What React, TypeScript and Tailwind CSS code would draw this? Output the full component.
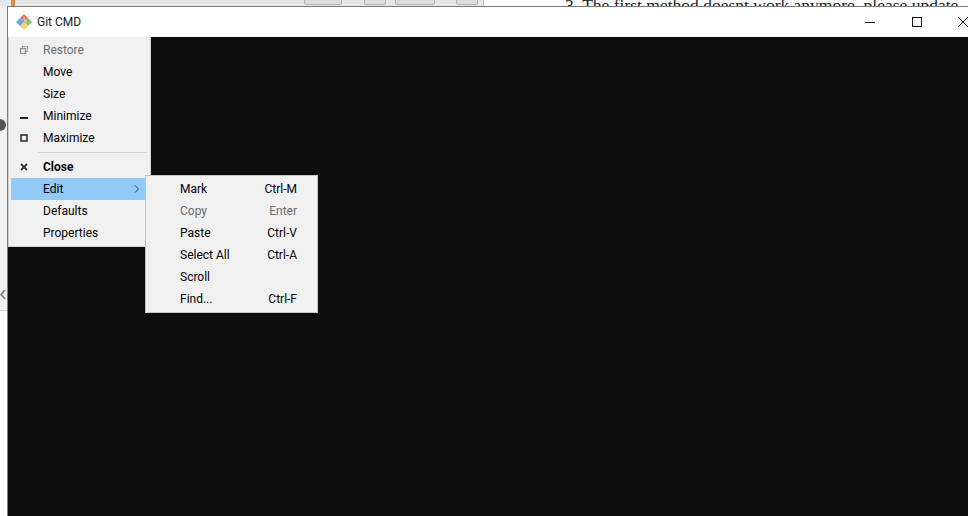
import React from "react";

function GitIcon() {
  return (
    <svg width="16" height="16" viewBox="0 0 16 16" className="shrink-0">
      <path d="M8 0 L12 4 L8 8 L4 4 Z" fill="#e0705f" />
      <path d="M12 4 L16 8 L12 12 L8 8 Z" fill="#86c566" />
      <path d="M8 8 L12 12 L8 16 L4 12 Z" fill="#f2d873" />
      <path d="M4 4 L8 8 L4 12 L0 8 Z" fill="#66abe8" />
      <path d="M8 3 L8 6 M8 6 L11 8" stroke="#fff" strokeWidth="0.8" fill="none" />
    </svg>
  );
}

function SysIcon({ kind }: { kind: string }) {
  if (kind === "restore")
    return (
      <svg width="8" height="8" viewBox="0 0 8 8">
        <rect x="2.5" y="0.5" width="5" height="5" fill="none" stroke="#a0a0a0" />
        <rect x="0.5" y="2.5" width="5" height="5" fill="#f0f0f0" stroke="#8e8e8e" strokeWidth="1.3" />
      </svg>
    );
  if (kind === "min")
    return (
      <svg width="8" height="8" viewBox="0 0 8 8">
        <rect x="0" y="5" width="8" height="2" fill="#222" />
      </svg>
    );
  if (kind === "max")
    return (
      <svg width="8" height="8" viewBox="0 0 8 8">
        <rect x="1" y="1" width="6" height="6" fill="none" stroke="#333" strokeWidth="1.6" />
      </svg>
    );
  if (kind === "close")
    return (
      <svg width="8" height="8" viewBox="0 0 8 8">
        <path d="M1 1 L7 7 M7 1 L1 7" stroke="#333" strokeWidth="1.8" />
      </svg>
    );
  return null;
}

function SysItem({
  label,
  icon,
  disabled,
  bold,
  active,
  arrow,
}: {
  label: string;
  icon?: string;
  disabled?: boolean;
  bold?: boolean;
  active?: boolean;
  arrow?: boolean;
}) {
  return (
    <div
      className={
        "flex h-[22px] items-center " +
        (active ? "bg-[#91c9f7] " : "") +
        (disabled ? "text-[#6d6d6d] " : "text-black ") +
        (bold ? "font-bold " : "")
      }
    >
      <div className="flex w-[32px] shrink-0 items-center pl-[9px]">
        {icon ? <SysIcon kind={icon} /> : null}
      </div>
      <span className="flex-1">{label}</span>
      {arrow ? (
        <svg width="6" height="8" viewBox="0 0 6 8" className="mr-[8px]">
          <path d="M1 0.5 L4.5 4 L1 7.5" fill="none" stroke="#333" strokeWidth="1" />
        </svg>
      ) : null}
    </div>
  );
}

function SubItem({ label, keys, disabled }: { label: string; keys?: string; disabled?: boolean }) {
  return (
    <div
      className={
        "flex h-[22px] items-center pl-[34px] pr-[20px] " + (disabled ? "text-[#6d6d6d]" : "text-black")
      }
    >
      <span className="flex-1">{label}</span>
      {keys ? <span>{keys}</span> : null}
    </div>
  );
}

export default function App() {
  return (
    <div
      className="relative h-[516px] w-[968px] overflow-hidden bg-[#f1f1f1] text-[12px] leading-[16px]"
      style={{ fontFamily: 'Roboto, "Noto Sans", sans-serif' }}
    >
      {/* page behind the window */}
      <div className="absolute left-0 top-0 flex h-[6px] w-[968px] overflow-hidden bg-white">
        <div className="relative h-[6px] w-[484px] border-r border-[#bcbcbc] bg-[#e6e6e6]">
          <div className="absolute left-[11px] top-0 h-[6px] w-[4px] bg-[#e08a3c]" />
          <div className="absolute left-[304px] top-[-6px] h-[11px] w-[38px] rounded-[2px] border border-[#b5b5b5] bg-[#dcdcdc]" />
          <div className="absolute left-[364px] top-[-6px] h-[11px] w-[22px] rounded-[2px] border border-[#b5b5b5] bg-[#dcdcdc]" />
          <div className="absolute left-[395px] top-[-6px] h-[11px] w-[40px] rounded-[2px] border border-[#b5b5b5] bg-[#dcdcdc]" />
          <div className="absolute left-[456px] top-[-6px] h-[11px] w-[22px] rounded-[2px] border border-[#b5b5b5] bg-[#dcdcdc]" />
        </div>
        <span
          className="absolute left-[565px] top-[-5px] whitespace-nowrap text-[17.5px] leading-[20px] text-[#222]"
          style={{ fontFamily: '"Liberation Serif", serif' }}
        >
          3. The first method doesnt work anymore, please update
        </span>
      </div>
      <div className="absolute left-0 top-[310px] h-[206px] w-[8px] border-t border-[#d0d0d0] bg-white" />
      <div className="absolute left-[-6px] top-[119px] h-[12px] w-[12px] rounded-full bg-[#555]" />
      <svg className="absolute left-0 top-[289px]" width="6" height="11" viewBox="0 0 6 11">
        <path d="M5 1 L1 5.5 L5 10" fill="none" stroke="#777" strokeWidth="1.6" />
      </svg>

      {/* window */}
      <div className="absolute left-[7px] top-[6px] flex h-[510px] w-[961px] flex-col border-l border-t border-[#7a7a7a] bg-white">
        <div className="flex h-[30px] shrink-0 items-center bg-white pb-[1px]">
          <div className="ml-[8px]">
            <GitIcon />
          </div>
          <span className="ml-[5px] text-[#1a1a1a]">Git CMD</span>
          <div className="flex-1" />
          <svg width="12" height="12" viewBox="0 0 12 12" className="mr-[35px]">
            <path d="M1 6.5 H11" stroke="#111" strokeWidth="1" />
          </svg>
          <svg width="12" height="12" viewBox="0 0 12 12" className="mr-[34px]">
            <rect x="1.5" y="1.5" width="9" height="9" fill="none" stroke="#111" />
          </svg>
          <svg width="12" height="12" viewBox="0 0 12 12" className="mr-[-1px]">
            <path d="M1 1 L11 11 M11 1 L1 11" stroke="#111" strokeWidth="1" />
          </svg>
        </div>
        <div className="flex-1 bg-[#0c0c0c]" />
      </div>

      {/* system menu */}
      <div className="absolute left-[8px] top-[37px] w-[143px] border-x border-b border-[#cfcfcf] bg-[#f0f0f0] px-[2px] pb-[2px] pt-[2px]">
        <SysItem label="Restore" icon="restore" disabled />
        <SysItem label="Move" />
        <SysItem label="Size" />
        <SysItem label="Minimize" icon="min" />
        <SysItem label="Maximize" icon="max" />
        <div className="my-[3px] ml-[27px] mr-[1px] h-[1px] bg-[#d4d4d4]" />
        <SysItem label="Close" icon="close" bold />
        <SysItem label="Edit" active arrow />
        <SysItem label="Defaults" />
        <SysItem label="Properties" />
      </div>

      {/* edit submenu */}
      <div className="absolute left-[145px] top-[175px] w-[173px] border border-[#c4c4c4] bg-[#f0f0f0] py-[2px]">
        <SubItem label="Mark" keys="Ctrl-M" />
        <SubItem label="Copy" keys="Enter" disabled />
        <SubItem label="Paste" keys="Ctrl-V" />
        <SubItem label="Select All" keys="Ctrl-A" />
        <SubItem label="Scroll" />
        <SubItem label="Find..." keys="Ctrl-F" />
      </div>
    </div>
  );
}
